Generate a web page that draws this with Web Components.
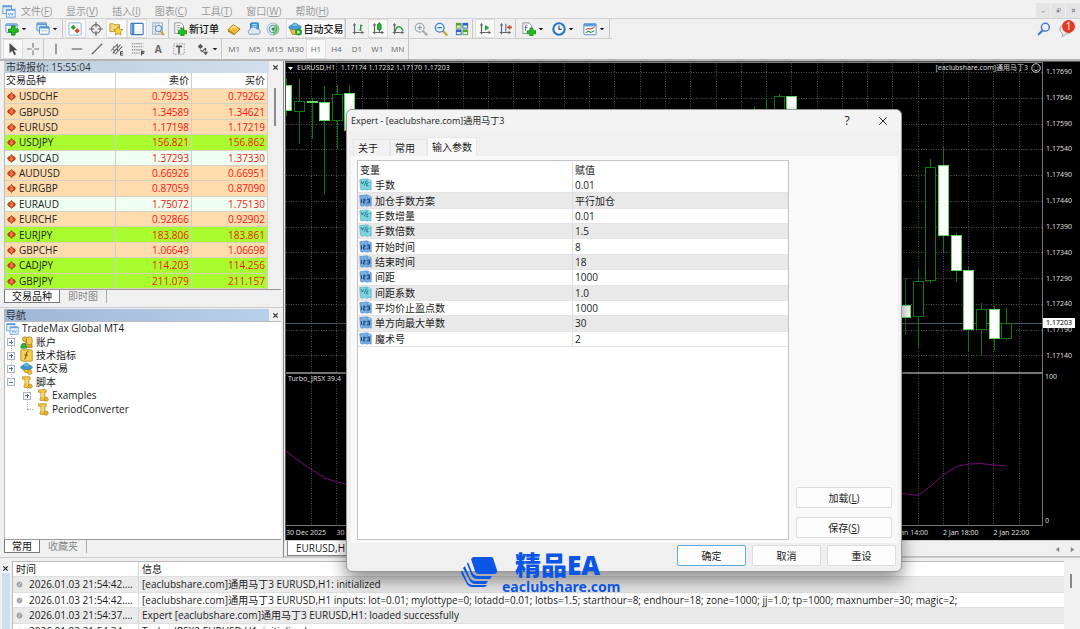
<!DOCTYPE html>
<html lang="zh-CN">
<head>
<meta charset="utf-8">
<title>MetaTrader 4 - EURUSD,H1</title>
<style>
  html, body { height: 100%; margin: 0; }
  body { font: 10px/14px "Open Sans", "Noto Sans CJK SC", sans-serif; color: #1a1a1a; background: #f0f0f0; overflow: hidden; }
</style>
</head>
<body>
<mt-app></mt-app>
<script>
class Base extends HTMLElement {
  constructor() {
    super();
    this.attachShadow({ mode: 'open' });
  }
  connectedCallback() {
    this.shadowRoot.innerHTML = '<style>*{box-sizing:border-box}button{font:inherit;color:inherit;border:0;background:none;padding:0;margin:0}' +
      this.css() + '</style>' + this.html();
  }
  css() { return ''; }
  html() { return '<slot></slot>'; }
}
const def = (name, cls) => customElements.define(name, cls);

const axes = '<path d="M4 2v12M2 12h12" stroke="#666" stroke-width="1.4" fill="none"/><path d="M4 1l-2 3h4zM15 12l-3-2v4z" fill="#666"/>';
const plus = '<path d="M9 7h3.500v3H16v3.500h-3.500V16H9v-2.500H6V10h3z" fill="#1fc01f" stroke="#0c7c0c" stroke-width=".8"/>';
const glass = c => `<path d="M10 10l4.500 4.500" stroke="${c === '#aaa' ? '#aaa' : '#c9a23a'}" stroke-width="2.600" stroke-linecap="round"/><circle cx="6.500" cy="6.500" r="5" fill="#eaf4fc" stroke="${c}" stroke-width="1.500"/>`;
const scroll = '<path d="M3 1h9.500v3H11v7h2v3H5v-3h1V4H3z" fill="#f1c94c" stroke="#b58a1b" stroke-width=".9"/><path d="M6 6h4M6 8.500h4" stroke="#fbeaa6"/><circle cx="12.500" cy="12.500" r="2.600" fill="#e6b52f" stroke="#a67c14" stroke-width=".7"/>';
const windows = '<rect x="1" y="2" width="10" height="9" fill="#e8f3fd" stroke="#5b98d4"/><path d="M1 3h10" stroke="#5b98d4" stroke-width="1.500"/><rect x="5" y="6" width="10" height="9" fill="#f4f9ff" stroke="#5b98d4"/><path d="M5 7h10" stroke="#5b98d4" stroke-width="1.500"/><path d="M7 10l1.500 3 1.500-3 1.500 3L13 10" stroke="#5a9bd8" fill="none"/>';
const ICONS = {
  app: windows,
  newchart: '<rect x="1" y="2" width="13" height="10" rx="1" fill="#eef5fb" stroke="#5c92c4"/><path d="M1 3.500h13" stroke="#6da6da" stroke-width="2"/><path d="M7.500 4.500h4V8H15v3.500h-3.500V15h-4v-3.500H4V8h3.500z" fill="#1fc01f" stroke="#0c7c0c" stroke-width=".9"/>',
  profiles: '<rect x="1" y="1" width="11" height="9" rx="1" fill="#dcebf8" stroke="#4a86bd"/><path d="M1 2.500h11" stroke="#5c9bd3" stroke-width="2"/><rect x="4" y="5" width="11" height="9" rx="1" fill="#f2f8fd" stroke="#4a86bd"/><path d="M4 6.500h11" stroke="#5c9bd3" stroke-width="2"/><path d="M6 10h7" stroke="#9cc0df"/>',
  market: '<rect x="1" y="1" width="14" height="14" rx="1" fill="#fff" stroke="#7fabd4"/><path d="M6 3l3 3-3 3-3-3z" fill="#29a52b"/><path d="M10.500 7l3 3-3 3-3-3z" fill="#dc4328"/>',
  cross: '<circle cx="8" cy="8" r="5" fill="none" stroke="#666" stroke-width="1.300"/><path d="M8 0v6M8 10v6M0 8h6M10 8h6" stroke="#666" stroke-width="1.300"/>',
  navigator: '<path d="M1 4V2h4l1 1h6v8H1z" fill="#f5d679" stroke="#bb9128"/><path d="M10.500 5l1.700 3.300 3.600.5-2.600 2.500.6 3.600-3.300-1.700-3.200 1.700.6-3.600L5.300 8.800l3.600-.5z" fill="#fbd540" stroke="#af8216" stroke-width=".8"/>',
  terminal: '<rect x="1" y="1.500" width="14" height="13" rx="1" fill="#fff" stroke="#3c77b5" stroke-width="1.300"/><rect x="2" y="2" width="3" height="12" fill="#4c8ed0"/><path d="M7 5h7M7 8h7M7 11h7" stroke="#e3ecf5"/>',
  tester: '<rect x="2" y="1" width="11" height="13" fill="#edf3f8" stroke="#8ba6bf"/><path d="M5 1v13M9 1v13M2 5h11" stroke="#9cb4ca"/><path d="M10.500 10.500L15 15" stroke="#cfa037" stroke-width="2"/><circle cx="8.500" cy="7.500" r="3.500" fill="#d8eaf7" stroke="#6a93b8" stroke-width="1.200"/>',
  order: '<path d="M2 1h7l3 3v9H2z" fill="#fff" stroke="#7c8b94"/><path d="M4 4h4M4 6.500h6M4 9h4" stroke="#999"/>' + plus,
  gold: '<path d="M1 9L7 3l8 5-6 6z" fill="#f0bb3a" stroke="#a3771a"/><path d="M1 9l8 5v1.500L1 11z" fill="#b8831f"/><path d="M4 8l4-3 3 2" fill="none" stroke="#fbe39a" stroke-width="1.500"/>',
  cloud: '<rect x="4" y="1" width="9" height="8" rx="1" fill="#3aa0e6" stroke="#1d6eb0"/><path d="M6 3h5M6 5h5" stroke="#cfe9fa"/><path d="M3 14a3 3 0 0 1 .5-5.500A4 4 0 0 1 11 8a3 3 0 0 1 2 6z" fill="#dceaf7" stroke="#6c93b8"/>',
  signal: '<circle cx="8" cy="8" r="6.800" fill="#dfeaf2" stroke="#9ab3c4"/><circle cx="8" cy="8" r="4.200" fill="none" stroke="#6c9fc2" stroke-width="1.300"/><path d="M8 8v7A7 7 0 0 0 15 8 7 7 0 0 0 11 2z" fill="#58b84d" opacity=".6"/><circle cx="8" cy="8" r="1.800" fill="#2d9936"/>',
  auto: '<path d="M2 7h12l-2 7H5z" fill="#efc23b" stroke="#a77b16"/><ellipse cx="8" cy="6" rx="7" ry="2.800" fill="#4aa6da" stroke="#23729f" stroke-width=".8"/><path d="M4 5.500C4 0 12 0 12 5.500z" fill="#77c4ec" stroke="#23729f" stroke-width=".8"/><circle cx="12" cy="11.500" r="4" fill="#22a52b"/><path d="M10.800 9.400v4.200l3.200-2.100z" fill="#fff"/>',
  bars: axes + '<path d="M11 3v7M9.500 9H11M11 4h2" stroke="#1b9a2a" stroke-width="1.500" fill="none"/>',
  candles: axes + '<path d="M9.500 0v12" stroke="#14761f"/><rect x="7.500" y="2" width="4" height="7" rx="1" fill="#25c033" stroke="#107519"/>',
  line: axes + '<path d="M5 11c1-7 5-8 9-1" stroke="#1b9a2a" stroke-width="1.400" fill="none"/>',
  zoomin: glass('#aaa') + '<path d="M4 6.500h5M6.500 4v5" stroke="#999" stroke-width="1.400"/>',
  zoomout: glass('#3886cf') + '<path d="M4 6.500h5" stroke="#2a69aa" stroke-width="1.400"/>',
  tile: '<rect x="1" y="1" width="6.500" height="6.500" fill="#54a32e"/><rect x="8.500" y="1" width="6.500" height="6.500" fill="#2d5fc4"/><rect x="1" y="8.500" width="6.500" height="6.500" fill="#2d5fc4"/><rect x="8.500" y="8.500" width="6.500" height="6.500" fill="#54a32e"/><path d="M2 4h4.500v2.500H2zM9.500 4H14v2.500H9.500zM2 11.500h4.500V14H2zM9.500 11.500H14V14H9.500z" fill="#e4efe0"/>',
  scroll: axes + '<path d="M8 3l5 3.500L8 10z" fill="#25ab35"/>',
  shift: axes + '<path d="M9 2v9" stroke="#356fb0" stroke-width="1.300"/><path d="M10 6l4-3v2h2v2h-2v2z" fill="#d4492a"/>',
  addind: '<path d="M1 1h7l3 3v9H1z" fill="#fff" stroke="#7c8b94"/><path d="M6 4c-2-1-2 1-2 6M3 6.500h3" stroke="#4a5a66" fill="none"/>' + plus,
  clock: '<circle cx="8" cy="8" r="6.500" fill="#f3f9ff" stroke="#2577c6" stroke-width="2.400"/><path d="M8 4v4.500h3" fill="none" stroke="#3a4c60" stroke-width="1.300"/>',
  template: '<rect x="1" y="2" width="14" height="12.500" rx="1" fill="#fff" stroke="#4c86bf"/><path d="M1 3.500h14" stroke="#5a9bd8" stroke-width="3"/><path d="M3 8.500l3-1 3 .5 4-2" stroke="#c84030" fill="none" stroke-width="1.200"/><path d="M3 12.500l3-2 3 1.500 4-2" stroke="#2b9b3b" fill="none" stroke-width="1.200"/>',
  cursor: '<path d="M4 1v12l3-3 2.500 5 2-1L9 9.500h4z" fill="#4a4a4a"/>',
  plus2: '<path d="M8 1v5.500M8 9.500V15M1 8h5.500M9.500 8H15" stroke="#777" stroke-width="1.300"/>',
  vline: '<path d="M8 2v12" stroke="#6b6b6b" stroke-width="1.400"/>',
  hline: '<path d="M2 8h12" stroke="#6b6b6b" stroke-width="1.400"/>',
  trend: '<path d="M2 14L14 2" stroke="#6b6b6b" stroke-width="1.400"/>',
  channel: '<path d="M1 10L9 2M3 13l9-10M6 14l8-9M4 5l1 8M8 2l1 9" stroke="#666" stroke-width="1.200"/><path d="M12 11h3M12 13h2.500M12 15h3M12 11v4" stroke="#444" stroke-width="1.100" fill="none"/>',
  fibo: '<path d="M1 2h13M1 5.500h13M1 9h13M1 12.500h9" stroke="#777" stroke-width="1.200" stroke-dasharray="1.500 1"/><path d="M12 15.500V11h3.500M12 13h3" stroke="#444" stroke-width="1.200" fill="none"/>',
  label: '<rect x="2" y="2" width="12" height="12" fill="none" stroke="#888" stroke-dasharray="1.500 1.500"/><path d="M4.500 5h7M8 5v8" stroke="#555" stroke-width="1.800"/>',
  arrows: '<path d="M2 5l3-3 3 3-3 3zM8 11h6l-3 4z" fill="#555"/><path d="M5 9l2 2 4-4M11 10V7" stroke="#555" stroke-width="1.400" fill="none"/>',
  search: '<path d="M6 10l-4 4" stroke="#4f78c9" stroke-width="2.600" stroke-linecap="round"/><circle cx="9.500" cy="6" r="4.500" fill="#eef4ff" stroke="#4f78c9" stroke-width="1.700"/>',
  chat: '<path d="M1 8a6 5 0 1 1 6 5l-4 3 .5-3.500A5 5 0 0 1 1 8z" fill="#e9ebee" stroke="#a4a9af"/>',
  accounts: '<circle cx="6" cy="4" r="3" fill="#efbd38" stroke="#96701a" stroke-width=".8"/><path d="M5 14c0-10 10-10 10-1v1z" fill="#e3aa25" stroke="#96701a" stroke-width=".8"/><rect x="8" y="1" width="7" height="10" rx="3" fill="#f3ca4e" stroke="#96701a" stroke-width=".8"/><path d="M1 15c0-8 7-8 7 0z" fill="#28b838" stroke="#137a1d" stroke-width=".8"/>',
  indicator: '<rect x="1" y="1" width="14" height="14" rx="1.500" fill="#f6d252" stroke="#a98416"/><path d="M10.500 3.500c-3-1-2.500 2-3 5s-1 4-2.500 3.500M5.500 7.500h4" stroke="#5d4b10" fill="none" stroke-width="1.200"/>',
  expert: '<path d="M3 7h10l-1 6H6z" fill="#efc23b" stroke="#a77b16" stroke-width=".8"/><ellipse cx="8" cy="6.500" rx="7.300" ry="2.800" fill="#3f9fd9" stroke="#23729f" stroke-width=".8"/><path d="M4 6C4 0 12 0 12 6z" fill="#62b6e4" stroke="#23729f" stroke-width=".8"/><circle cx="12" cy="12.500" r="2.800" fill="#edc03a" stroke="#a77b16" stroke-width=".7"/>',
  script: scroll,
  down: '<path d="M8 0l3 3.500h1.500L16 8l-3.500 4.500H11L8 16l-3-3.500H3.500L0 8l3.500-4.500H5z" fill="#b8431d"/><path d="M6 3h4v5h2.500L8 13 3.500 8H6z" fill="#f47a4c"/>',
  real: '<path d="M1 2l9-1 1 1 3 .5 1 1V15l-2-1-3 1-3-1-3 1-2-1z" fill="#7fd4df" stroke="#4fb4c3" stroke-width=".8"/><path d="M11 1v4h4" fill="#c7f1f5" stroke="#2c9eb0" stroke-width=".8"/><path d="M3 4l1 3.500L6 4M9 3L6.500 9M8.500 6.500c3-1.500 2.500 1 0 3h3" stroke="#146c7e" fill="none"/>',
  integer: '<path d="M1 2l9-1 1 1 3 .5 1 1V15l-2-1-3 1-3-1-3 1-2-1z" fill="#78aee2" stroke="#4b86c6" stroke-width=".8"/><path d="M11 1v4h4" fill="#bddcf6" stroke="#3672b5" stroke-width=".8"/><path d="M3 6.500V11M5 6.500h2.500v2H5.500V11H8M9.500 6.500H13V11H9.500M10.500 8.700H13" stroke="#0d376b" stroke-width="1.100" fill="none"/>',
  dot: '<circle cx="8" cy="8" r="6" fill="#a8a8a8" stroke="#8b8b8b"/><path d="M4 12l8-8" stroke="#ddd" stroke-width="1.500"/>',
  caret: '<path d="M2 5h12l-6 6.500z" fill="#111"/>',
  capcaret: '<path d="M0 3h16L8 13z" fill="#fff"/>',
  close: '<path d="M3 3l10 10M13 3L3 13" stroke="#222" stroke-width="2.500"/>',
  thinclose: '<path d="M2 2l12 12M14 2L2 14" stroke="#222" stroke-width="1.600"/>',
  min: '<path d="M3 12h8" stroke="#889" stroke-width="3"/>',
  restore: '<path d="M5 5V2h9v8h-3" fill="none" stroke="#889" stroke-width="2"/><rect x="2" y="6" width="8" height="8" fill="#889"/>',
  wclose: '<path d="M3 3l10 10M13 3L3 13" stroke="#889" stroke-width="3.500"/>',
  smile: '<circle cx="8" cy="8" r="6.800" fill="none" stroke="#ddd" stroke-width="1.500"/><path d="M5 5.500v1.500M11 5.500v1.500M4.500 10c2 3 5 3 7 0" fill="none" stroke="#ddd" stroke-width="1.400"/>',
  left: '<path d="M12 2v12L4 8z" fill="#888"/>',
  right: '<path d="M4 2v12l8-6z" fill="#888"/>'
};

def('mt-icon', class extends Base {
  css() { return `:host{display:inline-flex;flex:none}svg{display:block;width:${this.getAttribute('size') || 14}px;height:${this.getAttribute('size') || 14}px}`; }
  html() { return `<svg viewBox="0 0 16 16" aria-hidden="true">${ICONS[this.getAttribute('name')]}</svg>`; }
});

def('mt-menubar', class extends Base {
  css() { return `:host{display:flex;height:19px;align-items:center;padding:3px 0 0 2px;border-bottom:1px solid #d2d2d2;color:#9a9a9a;background:#f1f1f1}
    nav{display:flex;flex:1;padding-left:5px;gap:14px}
    .win{display:flex;align-self:stretch;width:45px;margin-right:-1px}.win button{flex:1;display:grid;place-items:center;background:#e4e4e4;border-right:1px solid #efefef}`; }
  html() { return `<mt-icon name="app"></mt-icon><nav>${['文件(F)', '显示(V)', '插入(I)', '图表(C)', '工具(T)', '窗口(W)', '帮助(H)'].map(t => `<button>${t.replace(/\((.)\)/, '(<u>$1</u>)')}</button>`).join('')}</nav>
    <div class="win">${['min', 'restore', 'wclose'].map(n => `<button aria-label="${n}"><mt-icon name="${n}" size="5"></mt-icon></button>`).join('')}</div>`; }
});

def('mt-group', class extends Base {
  css() { return `:host{display:flex;height:100%;flex:none;width:${this.getAttribute('w')}px;margin-right:2px;border-right:1px solid #c6c6c6}
    :host([open]){border-color:transparent}`; }
});
def('mt-tool', class extends Base {
  css() { return `:host{display:flex;flex:1;font-size:8px;font-weight:500;color:#666}
    :host([wide]){font-size:10px;color:#111}
    button{flex:1;display:flex;align-items:center;justify-content:center;gap:2px;white-space:nowrap}
    :host([on]) button{background:#f9f9f9;border:1px solid #dedede}
    mt-icon+mt-icon{margin-left:2px}`; }
  html() {
    const n = this.getAttribute('icon');
    return `<button>${n ? `<mt-icon name="${n}"></mt-icon>` : ''}<slot></slot>${this.hasAttribute('menu') ? '<mt-icon name="caret" size="6"></mt-icon>' : ''}</button>`;
  }
});
def('mt-toolbar', class extends Base {
  css() { return `:host{display:block;color:#666}
    .row{display:flex;height:20px;padding-left:2px;align-items:stretch;background:#f0f0f0;border-left:1px solid #ccc}
    .first{display:flex;justify-content:space-between}.bars{display:flex;border-bottom:1px solid #d0d0d0;border-left:1px solid #ccc;height:20px}
    .right{display:flex;gap:8px;align-items:center;padding-right:5px;position:relative}
    .badge{position:absolute;right:5px;top:1px;width:13px;height:13px;border-radius:50%;background:#e23a24;color:#fff;font-size:10px;line-height:13px;text-align:center}`; }
  html() {
    const t = (icons, on = []) => icons.map(i => `<mt-tool icon="${i}" ${on.includes(i) ? 'on' : ''}></mt-tool>`).join('');
    const m = i => `<mt-tool icon="${i}" menu></mt-tool>`;
    return `<div class="first"><div class="bars">
      <mt-group w="62">${m('newchart')}${m('profiles')}</mt-group>
      <mt-group w="104">${t(['market', 'cross', 'navigator', 'terminal', 'tester'], ['market', 'navigator', 'terminal'])}</mt-group>
      <mt-group w="51" open><mt-tool icon="order" wide>新订单</mt-tool></mt-group>
      <mt-group w="60" open>${t(['gold', 'cloud', 'signal'])}</mt-group>
      <mt-group w="60"><mt-tool icon="auto" wide on>自动交易</mt-tool></mt-group>
      <mt-group w="61">${t(['bars', 'candles', 'line'], ['candles'])}</mt-group>
      <mt-group w="62">${t(['zoomin', 'zoomout', 'tile'])}</mt-group>
      <mt-group w="41">${t(['scroll', 'shift'], ['scroll'])}</mt-group>
      <mt-group w="92">${m('addind')}${m('clock')}${m('template')}</mt-group>
      </div><div class="right"><mt-icon name="search"></mt-icon><mt-icon name="chat" size="16"></mt-icon><span class="badge">1</span></div></div>
      <div class="row">
      <mt-group w="41">${t(['cursor', 'plus2'], ['cursor'])}</mt-group>
      <mt-group w="144" open>${['vline', 'hline', 'trend', 'channel', 'fibo'].map(i => t([i])).join('')}<mt-tool wide><b style="color:#666">A</b></mt-tool>${t(['label'])}</mt-group>
      <mt-group w="30">${m('arrows')}</mt-group>
      <mt-group w="185">${['M1', 'M5', 'M15', 'M30', 'H1', 'H4', 'D1', 'W1', 'MN'].map(p => `<mt-tool ${p === 'H1' ? 'on' : ''}>${p}</mt-tool>`).join('')}</mt-group>
      </div>`;
  }
});

def('mt-panel', class extends Base {
  css() { return `:host{display:flex;flex-direction:column;padding:0 2px 0 4px;min-height:0}
    header{display:flex;height:12px;line-height:12px;align-items:center;color:#333}
    h2{flex:1;margin:0;font:inherit;line-height:12px;padding-left:2px;background:linear-gradient(90deg,#bccddd,#d2dfec)}
    :host([active]) h2{background:linear-gradient(90deg,#9fb7d6,#b8d0ea)}
    header button{width:12px;display:grid;place-items:center}
    .body{flex:1;min-height:0}`; }
  html() { return `<header><h2>${this.getAttribute('label')}</h2><button aria-label="关闭"><mt-icon name="close" size="7"></mt-icon></button></header><div class="body"><slot></slot></div><slot name="tabs"></slot>`; }
});
def('mt-tabs', class extends Base {
  css() { return `:host{display:flex;height:14px;border-top:1px solid #9a9a9a;color:#8a8a8a}
    button{padding:0 8px;line-height:13px;border-right:1px solid #aaa}
    button:first-of-type{background:#fff;color:#111;border:1px solid #777;border-top:0;padding:0 7px;line-height:13px}`; }
  html() { return this.getAttribute('items').split(',').map(t => `<button>${t}</button>`).join(''); }
});

const QUOTES = [['USDCHF', '0.79235', '0.79262', 'o'], ['GBPUSD', '1.34589', '1.34621', 'o'], ['EURUSD', '1.17198', '1.17219', 'o'], ['USDJPY', '156.821', '156.862', 'g'], ['USDCAD', '1.37293', '1.37330', 'm'], ['AUDUSD', '0.66926', '0.66951', 'o'], ['EURGBP', '0.87059', '0.87090', 'o'], ['EURAUD', '1.75072', '1.75130', 'm'], ['EURCHF', '0.92866', '0.92902', 'o'], ['EURJPY', '183.806', '183.861', 'g'], ['GBPCHF', '1.06649', '1.06698', 'o'], ['CADJPY', '114.203', '114.256', 'g'], ['GBPJPY', '211.079', '211.157', 'g']];
def('mt-market', class extends Base {
  css() { return `:host{display:flex;height:216px;border-left:1px solid #bbb}
    table{flex:1;height:100%;border-collapse:separate;border-spacing:0;table-layout:fixed;line-height:14px;background:#fff}
    col.n{width:76px}
    th,td{font-weight:400;padding:0 2px 0 0;text-align:right;border-right:1px solid #d0d0c8;border-bottom:1px solid #d8d0c0;white-space:nowrap}
    th{border-bottom-color:#ddd;line-height:15px}
    th:first-child,td:first-child{text-align:left;padding-left:1px}
    td:first-child{color:#222}td{color:#f81414}
    td:first-child mt-icon{vertical-align:middle;margin:-2px 3px 0 1px}
    .o td{background:#ffdcae}.g td{background:#a9fc2e}.m td{background:#effff2}
    .bar{width:13px;padding:15px 0 0 6px}.bar i{display:block;width:2px;height:38px;background:#8b8b8b}`; }
  html() { return `<table><colgroup><col><col class="n"><col class="n"></colgroup><thead><tr><th>交易品种</th><th>卖价</th><th>买价</th></tr></thead><tbody>${QUOTES.map(q => `<tr class="${q[3]}"><td><mt-icon name="down" size="9"></mt-icon>${q[0]}</td><td>${q[1]}</td><td>${q[2]}</td></tr>`).join('')}</tbody></table><div class="bar"><i></i></div>`; }
});

def('mt-tree', class extends Base {
  css() { return `:host{display:block;height:100%;background:#fff;border:1px solid #bbb;border-width:1px 0 0 1px}
    ul{list-style:none;margin:0;padding:0 0 0 1px;height:94px;display:grid;grid-auto-rows:1fr;color:#1a1a1a;
      background:repeating-linear-gradient(#bbb 0 1px,#fff 1px 2px) 6px 12px/1px 48px no-repeat,repeating-linear-gradient(#bbb 0 1px,#fff 1px 2px) 22px 66px/1px 21px no-repeat}
    li{display:flex;align-items:center;gap:3px;line-height:13px}
    .l1{padding-left:1px}.l2{padding-left:17px}
    i{width:8px;height:8px;border:1px solid #aab4c4;background:linear-gradient(#5470a8,#5470a8) center/4px 1px no-repeat #f7f9fc;flex:none;margin-right:2px}
    i.p{background:linear-gradient(#5470a8,#5470a8) center/4px 1px no-repeat,linear-gradient(#5470a8,#5470a8) center/1px 4px no-repeat,#f7f9fc}
    i.n{border:0;border-bottom:1px dotted #aaa;height:1px;width:6px;margin:0 0 0 4px;background:none}`; }
  html() {
    const rows = [[0, '', 'app', 'TradeMax Global MT4'], [1, 'p', 'accounts', '账户'], [1, 'p', 'indicator', '技术指标'], [1, 'p', 'expert', 'EA交易'], [1, 'm', 'script', '脚本'], [2, 'p', 'script', 'Examples'], [2, 'n', 'script', 'PeriodConverter']];
    return `<ul>${rows.map(r => `<li class="l${r[0]}">${r[1] ? `<i class="${r[1]}"></i>` : ''}<mt-icon name="${r[2]}" size="13"></mt-icon>${r[3]}</li>`).join('')}</ul>`;
  }
});

/* Bars: centre x, body top, body bottom, high, low, filled. */
const CANDLES = [[286.5, 85, 110, 78, 116, 1], [299.5, 101, 111, 79, 144, 0], [312.5, 101, 102, 98, 139, 1], [324.5, 102, 120, 86, 195, 1], [337.5, 94, 120, 85, 149, 0], [349.5, 93, 130, 85, 140, 1], [754.5, 112, 130, 106, 130, 0], [766.5, 112, 130, 98, 130, 0], [779.5, 96, 130, 94, 130, 0], [791.5, 96, 130, 96, 130, 1], [905.5, 305, 317, 278, 335, 1], [918.5, 281, 316, 270, 348, 0], [930.5, 167, 280, 159, 283, 0], [943.5, 165, 235, 147, 253, 1], [956.5, 235, 270, 233, 282, 1], [968.5, 270, 329, 267, 351, 1], [981.5, 309, 329, 303, 356, 0], [994.5, 309, 338, 306, 351, 1], [1006.5, 323, 338, 308, 340, 0]];
def('mt-chart', class extends Base {
  css() { return `:host{display:grid;grid-template:310px 1fr 14px/1fr 37px;background:#000;color:#ddd;font:7px/10px "Noto Sans","Noto Sans CJK SC",sans-serif;border:1px solid #555;border-width:1px 0 0 1px;min-height:0}
    .plot{position:relative;border:1px solid #777;border-width:1px 1px 0 0;min-width:0}
    .sub{border-top:2px solid #777;border-bottom:1px solid #777}
    svg{position:absolute;inset:0;width:100%;height:100%}
    .cap{position:absolute;left:2px;top:0;display:flex;align-items:center;gap:4px;white-space:pre}
    .ea{position:absolute;right:1px;top:0;display:flex;align-items:center;gap:3px}
    .prices{position:relative;display:flex;flex-direction:column;justify-content:space-between;height:294px;padding-left:3px;margin-top:5px}
    .now{position:absolute;left:0;top:251px;background:#fff;color:#000;padding:0 0 0 3px;width:32px}
    .range{display:flex;flex-direction:column;justify-content:space-between;padding-left:2px}
    .time{grid-column:1/-1;display:grid;grid-template-columns:repeat(15,1fr);margin-right:36px;white-space:nowrap}
    .time span{width:0;padding-top:2px}`; }
  html() {
    let grid = '', sub = '';
    for (let i = 0; i < 29; i++) {
      const x = Math.round(311.2 + i * 25.27) + .5;
      grid += `M${x} 61V372`; sub += `M${x} 373V526`;
    }
    for (let i = 0; i < 12; i++) grid += `M286 ${Math.round(72 + i * 25.77) + .5}H1043`;
    const dash = 'stroke="#4a525c" stroke-dasharray="1 1.500"';
    const bars = CANDLES.map(([x, t, b, h, l, f]) => `<path d="M${x} ${h}V${t}M${x} ${b}V${l}" stroke="#0a7a0a"/><rect x="${x - 5}" y="${t + .5}" width="10" height="${b - t}" fill="${f ? '#fff' : '#000'}" stroke="${f ? '#5fdc5f' : '#0a7a0a'}"/>`).join('');
    const prices = ['1.17690', '1.17640', '1.17590', '1.17540', '1.17490', '1.17440', '1.17390', '1.17340', '1.17290', '1.17240', '1.17190', '1.17140'];
    return `<div class="plot"><svg viewBox="286 63 756 309" preserveAspectRatio="none"><path d="${grid}" ${dash}/><path d="M286 323.500H1043" stroke="#4b5660"/>${bars}</svg>
      <div class="cap"><mt-icon name="capcaret" size="5"></mt-icon>EURUSD,H1   1.17174 1.17232 1.17170 1.17203</div>
      <div class="ea">[eaclubshare.com]通用马丁3<mt-icon name="smile" size="10"></mt-icon></div></div>
      <div class="prices">${prices.map(p => `<span>${p}</span>`).join('')}<span class="now">1.17203</span></div>
      <div class="plot sub"><svg viewBox="286 374 756 151" preserveAspectRatio="none"><path d="${sub}" ${dash}/><path d="M286 451L299 461 312 470 325 478 337 482 350 485M893 492L902 493.500 918 495.500 932 485 943 475 957 466.500 969 464 981 463.500 994 465 1007 466" stroke="#7a087a" fill="none"/></svg><div class="cap">Turbo_JRSX 39.4</div></div>
      <div class="range"><span>100</span><span>0</span></div>
      <div class="time">${['30 Dec 2025', '30 Dec 06:00', '', '', '', '', '', '', '', '', '', '', '2 Jan 14:00', '2 Jan 18:00', '2 Jan 22:00'].map(t => `<span>${t}</span>`).join('')}</div>`;
  }
});

def('mt-charttabs', class extends Base {
  css() { return `:host{display:flex;justify-content:space-between;height:17px;padding:0 4px 0 3px;border-top:1px solid #ccc;border-bottom:1px solid #c2c2c2}
    button{background:#fff;border:1px solid #888;border-top:0;padding:0 8px;line-height:14px}
    .nav{display:flex;gap:8px;align-items:center}.nav button{background:none;border:0;padding:0}`; }
  html() { return `<button>EURUSD,H1</button><div class="nav"><button aria-label="left"><mt-icon name="left" size="7"></mt-icon></button><button aria-label="right"><mt-icon name="right" size="7"></mt-icon></button></div>`; }
});

def('mt-log', class extends Base {
  css() { return `:host{display:grid;grid-template-columns:12px 1fr 16px;height:72px;overflow:hidden;padding-top:3px;border-top:1px solid #ccc}
    .side{display:flex;flex-direction:column;gap:3px;align-items:flex-start;padding-left:2px}.side button{height:9px}.side i{width:8px;height:70px;background:#cfdeec}
    table{width:100%;height:78px;border-collapse:separate;border-spacing:0;table-layout:fixed;background:#fff;border:1px solid #bbb;border-width:1px 0 0 1px}
    col.t{width:126px}th,td{padding:0 3px;text-align:left;font-weight:400;white-space:nowrap;border-bottom:1px solid #e0e0e0}
    th:first-child,td:first-child{border-right:1px solid #d8d8d8}tbody tr:nth-child(odd){background:#eaeaea}
    td mt-icon{vertical-align:middle;margin:-2px 6px 0 0}
    .bar{padding:13px 0 0 6px}.bar i{display:block;width:2px;height:14px;background:#888}`; }
  html() {
    const rows = [['2026.01.03 21:54:42....', '[eaclubshare.com]通用马丁3 EURUSD,H1: initialized'], ['2026.01.03 21:54:42....', '[eaclubshare.com]通用马丁3 EURUSD,H1 inputs: lot=0.01; mylottype=0; lotadd=0.01; lotbs=1.5; starthour=8; endhour=18; zone=1000; jj=1.0; tp=1000; maxnumber=30; magic=2;'], ['2026.01.03 21:54:37....', 'Expert [eaclubshare.com]通用马丁3 EURUSD,H1: loaded successfully'], ['2026.01.03 21:54:34....', 'Turbo_JRSX2 EURUSD,H1: initialized']];
    return `<div class="side"><button aria-label="关闭"><mt-icon name="close" size="7"></mt-icon></button><i></i></div><table><colgroup><col class="t"><col></colgroup><thead><tr><th>时间</th><th>信息</th></tr></thead><tbody>${rows.map(r => `<tr><td><mt-icon name="dot" size="7"></mt-icon>${r[0]}</td><td>${r[1]}</td></tr>`).join('')}</tbody></table><div class="bar"><i></i></div>`;
  }
});

def('mt-params', class extends Base {
  css() { return `:host{display:block;background:#fff;border:1px solid #c4c4c4;padding-top:1px}
    table{width:100%;height:185px;border-collapse:separate;border-spacing:0;table-layout:fixed}
    th,td{padding:0 2px;text-align:left;font-weight:400;white-space:nowrap;border-bottom:1px solid #e4e4e4}
    th{border-bottom:0;line-height:16px}th:first-child,td:first-child{border-right:1px solid #ddd}td:first-child{padding-left:1px}
    tbody tr:nth-child(even){background:#e9e9e9}mt-icon{vertical-align:top;margin-right:3px}`; }
  html() {
    const rows = [['real', '手数', '0.01'], ['integer', '加仓手数方案', '平行加仓'], ['real', '手数增量', '0.01'], ['real', '手数倍数', '1.5'], ['integer', '开始时间', '8'], ['integer', '结束时间', '18'], ['integer', '间距', '1000'], ['real', '间距系数', '1.0'], ['integer', '平均价止盈点数', '1000'], ['integer', '单方向最大单数', '30'], ['integer', '魔术号', '2']];
    return `<table><thead><tr><th>变量</th><th>赋值</th></tr></thead><tbody>${rows.map(r => `<tr><td><mt-icon name="${r[0]}" size="13"></mt-icon>${r[1]}</td><td>${r[2]}</td></tr>`).join('')}</tbody></table>`;
  }
});

def('mt-dialog', class extends Base {
  css() { return `:host{position:absolute;left:346px;top:109px;width:556px;height:463px;display:flex;flex-direction:column;background:#f0f0f0;border:1px solid #999;border-radius:6px;box-shadow:0 8px 18px rgba(0,0,0,.45);padding:0 3px 5px 4px}
    header{display:flex;align-items:center;height:22px;background:#f3f3f3;margin:0 -3px 0 -4px;padding:0 12px 0 4px;border-radius:6px 6px 0 0}
    h1{font:inherit;font-size:9px;margin:0;flex:1}header button{display:grid;place-items:center;width:12px;margin-left:24px;font-size:12px}
    .tabs{display:flex;height:24px;align-items:flex-end;padding-left:2px}
    .tabs button{height:17px;width:37px;border:1px solid #e6e6e6;border-bottom:0;background:#f2f2f2;text-align:left;padding-left:4px}
    .tabs button:last-child{height:19px;width:50px;background:#f9f9f9}
    .page{flex:1;min-height:0;display:flex;gap:7px;background:#f9f9f9;padding:4px 6px 3px 6px}
    .page mt-params{flex:1}.side{width:96px;display:flex;flex-direction:column;justify-content:flex-end;gap:9px;padding-bottom:2px}
    footer{display:flex;justify-content:flex-end;gap:6px;padding:2px 2px 0}
    .b{height:21px;background:#fdfdfd;border:1px solid #dcdcdc;border-radius:2px}footer .b{width:69px}footer .ok{border-color:#62addf}`; }
  html() { return `<header><h1>Expert - [eaclubshare.com]通用马丁3</h1><button aria-label="帮助">?</button><button aria-label="关闭"><mt-icon name="thinclose" size="10"></mt-icon></button></header>
    <div class="tabs"><button>关于</button><button>常用</button><button>输入参数</button></div>
    <div class="page"><mt-params></mt-params><div class="side"><button class="b">加载(<u>L</u>)</button><button class="b">保存(<u>S</u>)</button></div></div>
    <footer><button class="b ok">确定</button><button class="b">取消</button><button class="b">重设</button></footer>`; }
});

def('mt-watermark', class extends Base {
  css() { return `:host{position:absolute;left:461px;top:551px;display:flex;gap:4px;color:#0c56e6;font:700 14px/13px "Noto Sans","Noto Sans CJK SC",sans-serif}
    svg{width:37px;height:33px;margin-top:5px}div{display:flex;flex-direction:column}
    b{font-size:26px;line-height:29px;padding-left:13px}`; }
  html() { return `<svg viewBox="0 0 37 33" aria-hidden="true"><g fill="#0c56e6"><path d="M12 1h18a2 2 0 0 1 2 1l4 12a3 3 0 0 1-3 4H18a4 4 0 0 1-4-3L10 3z"/><path d="M7 6l4 10a7 7 0 0 0 6 4h14l-2 3H16a7 7 0 0 1-6-5L6 8z"/><path d="M4 10l4 10a7 7 0 0 0 6 5h13l-2 3H14a7 7 0 0 1-6-5L2 12z"/><path d="M1 14l5 11a6 6 0 0 0 5 4h15l-2 2H11a7 7 0 0 1-6-5L0 17z"/></g></svg><div><b>精品EA</b><span>eaclubshare.com</span></div>`; }
});

def('mt-app', class extends Base {
  css() { return `:host{display:flex;flex-direction:column;height:100vh;min-height:0;position:relative;overflow:hidden}
    main{flex:1;min-height:0;display:grid;grid-template-columns:284px 1fr;border-top:2px solid #b4b4b4}
    .left{display:flex;flex-direction:column;border-right:1px solid #888;min-height:0;padding-bottom:4px}
    .left mt-panel:first-child{padding-bottom:4px;border-bottom:1px solid #ccc;margin-bottom:1px}
    .left mt-panel:last-child{flex:1}
    .right{display:flex;flex-direction:column;min-width:0;min-height:0}
    mt-chart{flex:1;margin-left:1px}`; }
  html() { return `<mt-menubar></mt-menubar><mt-toolbar></mt-toolbar>
    <main><div class="left"><mt-panel label="市场报价: 15:55:04"><mt-market></mt-market><mt-tabs slot="tabs" items="交易品种,即时图"></mt-tabs></mt-panel>
    <mt-panel label="导航" active><mt-tree></mt-tree><mt-tabs slot="tabs" items="常用,收藏夹"></mt-tabs></mt-panel></div>
    <div class="right"><mt-chart></mt-chart><mt-charttabs></mt-charttabs></div></main>
    <mt-log></mt-log><mt-dialog role="dialog"></mt-dialog><mt-watermark></mt-watermark>`; }
});
</script>
</body>
</html>
